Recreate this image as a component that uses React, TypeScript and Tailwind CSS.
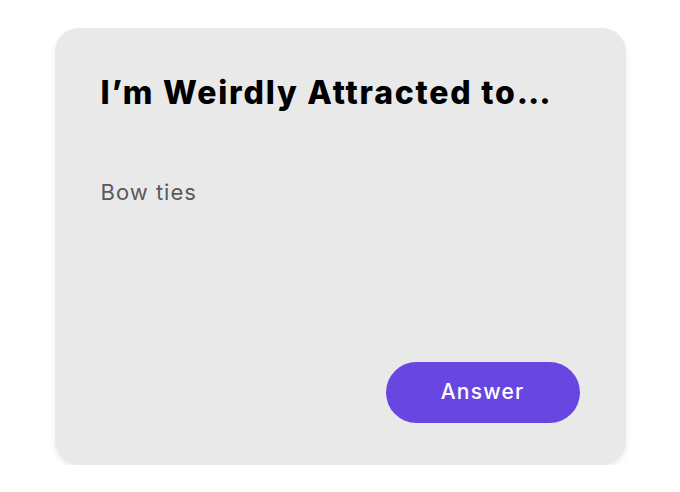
export default function App() {
    return (
        <div className="flex justify-center pt-[28px] font-['Inter',sans-serif]">
            <div className="flex h-[437px] w-[571px] flex-col rounded-[24px] bg-[#e9e9e9] px-[46px] pt-[45px] pb-[42px] shadow-[0_3px_6px_rgba(0,0,0,0.08)]">
                <h1 className="text-[32px] font-extrabold leading-[40px] tracking-[1.8px] text-black">
                    I’m Weirdly Attracted to…
                </h1>
                <p className="mt-[65px] text-[22px] leading-[28px] tracking-[1px] text-[#5a5a5a]">Bow ties</p>
                <div className="mt-auto flex justify-end">
                    <button className="h-[61px] w-[194px] rounded-full bg-[#6846e0] pb-[2px] text-[21px] font-medium tracking-[1.2px] text-white">
                        Answer
                    </button>
                </div>
            </div>
        </div>
    );
}
